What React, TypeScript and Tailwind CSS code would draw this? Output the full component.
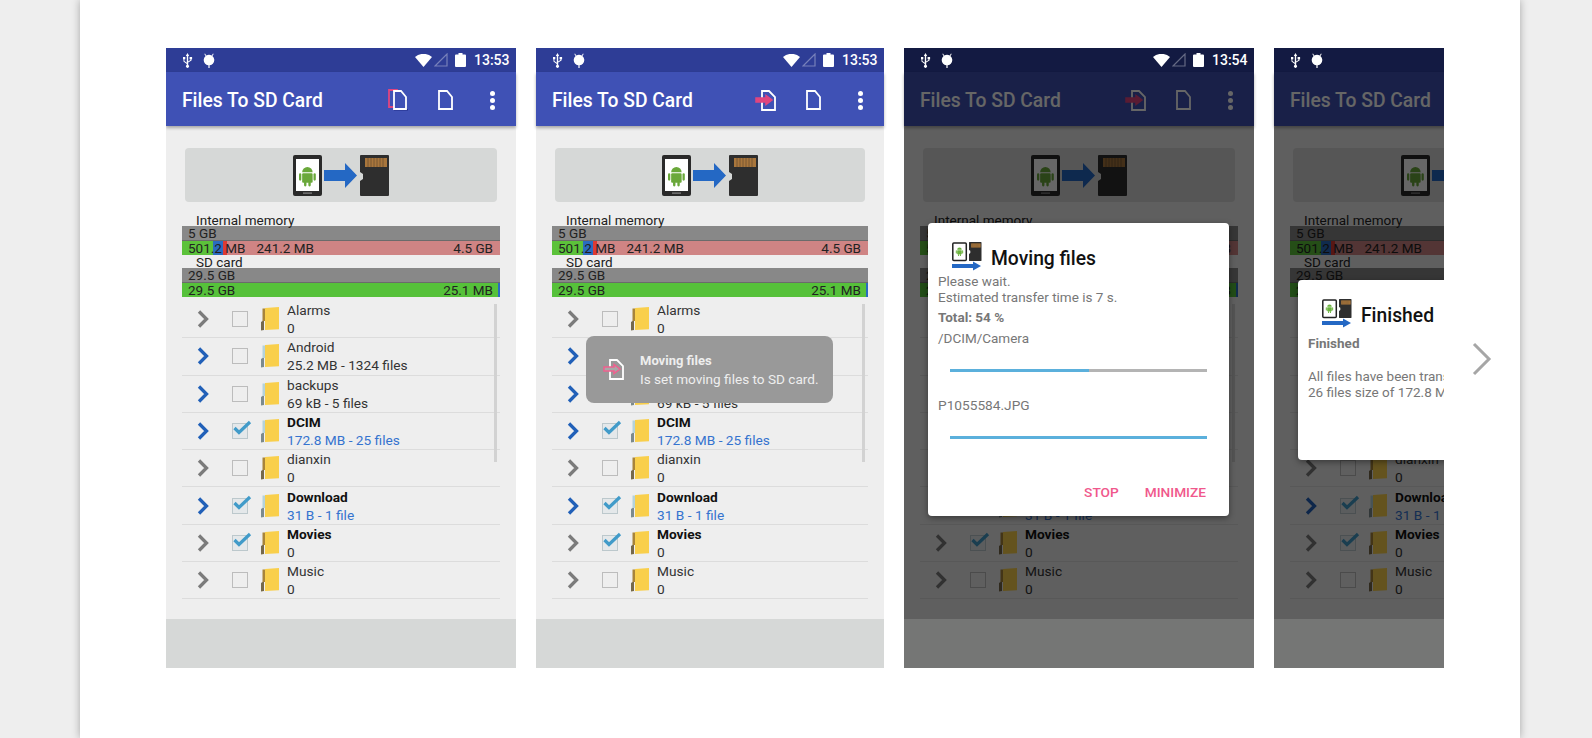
import React from "react";

const rows = [
  { name: "Alarms", sub: "0" },
  { name: "Android", sub: "25.2 MB - 1324 files", full: true },
  { name: "backups", sub: "69 kB - 5 files", full: true },
  { name: "DCIM", sub: "172.8 MB - 25 files", full: true, checked: true },
  { name: "dianxin", sub: "0" },
  { name: "Download", sub: "31 B - 1 file", full: true, checked: true },
  { name: "Movies", sub: "0", checked: true },
  { name: "Music", sub: "0" },
];

const AndroidGlyph = ({ x, y, s, color = "#6aa83a" }: { x: number; y: number; s: number; color?: string }) => (
  <g transform={`translate(${x} ${y}) scale(${s})`} fill={color}>
    <path d="M3 6a5 5 0 0 1 10 0z" />
    <rect x="3" y="7" width="10" height="9" rx="1" />
    <rect x="0" y="7" width="2.2" height="7" rx="1.1" />
    <rect x="13.8" y="7" width="2.2" height="7" rx="1.1" />
    <rect x="4.8" y="15" width="2.3" height="4.5" rx="1.1" />
    <rect x="8.9" y="15" width="2.3" height="4.5" rx="1.1" />
  </g>
);

const SdCard = ({ x, y, w, h }: { x: number; y: number; w: number; h: number }) => (
  <g transform={`translate(${x} ${y}) scale(${w / 29} ${h / 41})`}>
    <path d="M1 0h27a1 1 0 0 1 1 1v39a1 1 0 0 1-1 1H1a1 1 0 0 1-1-1V26l3-2v-5l-3-2V1a1 1 0 0 1 1-1z" fill="#2e2e2e" />
    <rect x="5" y="3" width="22" height="9" fill="#a9763c" />
    <path d="M8 3v9M11 3v9M14 3v9M17 3v9M20 3v9M23 3v9" stroke="#6d5230" strokeWidth="0.8" />
  </g>
);

const Banner = () => (
  <svg width="96" height="41" viewBox="0 0 96 41" className="block">
    <rect x="0" y="0" width="29" height="41" rx="2" fill="#2a2a2a" />
    <rect x="3" y="4" width="23" height="32" fill="#ffffff" />
    <rect x="10" y="37.5" width="9" height="1.2" fill="#888888" />
    <AndroidGlyph x={6} y={11} s={1.05} />
    <path d="M31 15h21V8l12 12.500L52 33v-7H31z" fill="#2468c4" />
    <SdCard x={67} y={0} w={29} h={41} />
  </svg>
);

const DialogIcon = () => (
  <svg width="30" height="29" viewBox="0 0 30 29" className="block shrink-0">
    <rect x="0.800" y="1" width="13.500" height="17.500" rx="1" fill="#ffffff" stroke="#222222" strokeWidth="1.500" />
    <AndroidGlyph x={3.800} y={5} s={0.46} color="#6cb33f" />
    <SdCard x={17} y={0} w={12.500} h={19} />
    <path d="M0 22h21v-2.500l8 4.500-8 4.500V26H0z" fill="#2468c4" />
  </svg>
);

const CopyIcon = () => (
  <svg width="20" height="22" viewBox="0 0 20 22" className="block">
    <path d="M1 1h8v17H1z" fill="none" stroke="#e0457f" strokeWidth="1.800" />
    <path d="M6 20.800h14" stroke="#1a237e" strokeWidth="1.200" />
    <path d="M6 2h7l5 6v12H6z" fill="#3f51b5" stroke="#ffffff" strokeWidth="1.800" />
  </svg>
);

const MoveIcon = ({ outline }: { outline?: boolean }) => (
  <svg width="21" height="21" viewBox="0 0 21 21" className="block">
    <path d="M7 1h7l6 6v13H7z" fill="none" stroke="#ffffff" strokeWidth="1.800" />
    <path d="M1 8h10V5.500l6 4.500-6 4.500V12H1z" fill={outline ? "#a8a8a8" : "#e0457f"} stroke={outline ? "#f0608f" : "#e0457f"} strokeWidth="1.500" />
  </svg>
);

const DocIcon = () => (
  <svg width="15" height="20" viewBox="0 0 15 20" className="block">
    <path d="M1 1h8l5 6v12H1z" fill="none" stroke="#ffffff" strokeWidth="1.800" />
  </svg>
);

const Chevron = ({ color }: { color: string }) => (
  <svg width="12" height="18" viewBox="0 0 12 18" className="block shrink-0">
    <path d="M2 1.500 9.500 9 2 16.500" fill="none" stroke={color} strokeWidth="3.300" />
  </svg>
);

const Folder = ({ full }: { full?: boolean }) => (
  <svg width="18" height="24" viewBox="0 0 18 24" className="block shrink-0">
    <path d="M0 15l3-2v10l-3 .5z" fill={full ? "#7c8a8c" : "#75684a"} />
    <path d="M1.500 1.500h3V14h-3z" fill={full ? "#b4d2da" : "#a8843a"} />
    <path d="M4 1.100 18 0v22.300L4 23z" fill="#f9cf4b" />
  </svg>
);

const Checkbox = ({ checked }: { checked?: boolean }) => (
  <div className={`relative w-4 h-4 shrink-0 border-[1.5px] ${checked ? "border-[#bcc8cc] bg-[#e4e8ea]" : "border-[#bcbcbc]"}`}>
    {checked && (
      <svg width="20" height="16" viewBox="0 0 20 16" className="absolute -top-[4px] left-0">
        <path d="M1.500 8l4.500 4.500L17 2" fill="none" stroke="#419bc9" strokeWidth="3.200" />
      </svg>
    )}
  </div>
);

const StatusBar = ({ time, dim }: { time: string; dim?: boolean }) => (
  <div className={`h-6 shrink-0 flex items-center pl-[16px] pr-2 ${dim ? "bg-[#131a42]" : "bg-[#2e3d96]"}`}>
    <svg width="11" height="15" viewBox="0 0 11 15" className="block">
      <path d="M5.500 0 3.800 3h1v6.800L2.400 8V6.300h.9V4H1v2.300h.5v2.100l3.300 2.600v1a1.500 1.500 0 1 0 1.400 0V9.400l3.300-2V6.300h.6V4H7.600v2.300h.8v.7L6.200 8.400V3h1z" fill="#ffffff" />
    </svg>
    <svg width="12" height="15" viewBox="0 0 12 15" className="block ml-[10px]">
      <path d="M2 .5 3.300 2.500a5 5 0 0 1 5.400 0L10 .5l.7.400-1.300 2.100A5.300 5.300 0 1 1 2.600 3L1.300 .9z" fill="#ffffff" />
      <rect x="5.400" y="10" width="1.200" height="5" fill="#ffffff" />
    </svg>
    <div className="flex-1" />
    <svg width="17" height="13" viewBox="0 0 17 13" className="block">
      <path d="M0 3a13 13 0 0 1 17 0L8.500 13z" fill="#ffffff" />
    </svg>
    <svg width="14" height="14" viewBox="0 0 14 14" className="block ml-[2px]">
      <path d="M1 13 13 1v12z" fill="none" stroke="#ffffff" strokeOpacity="0.35" strokeWidth="1.200" />
    </svg>
    <svg width="11" height="14" viewBox="0 0 11 14" className="block ml-[7px]">
      <path d="M3.500 0h4v1.500H10a1 1 0 0 1 1 1V13a1 1 0 0 1-1 1H1a1 1 0 0 1-1-1V2.500a1 1 0 0 1 1-1h2.500z" fill="#ffffff" />
    </svg>
    <span className="ml-2 w-[34px] text-[14px] font-medium leading-none text-white">{time}</span>
  </div>
);

const Toolbar = ({ icon }: { icon: "copy" | "move" }) => (
  <div className="relative h-[54px] shrink-0 flex items-center pl-4 pr-[21px] bg-[#3f51b5] shadow-[0_2px_3px_rgba(0,0,0,0.3)]">
    <span className="flex-1 pt-1 text-[19.300px] font-medium text-white">Files To SD Card</span>
    <div className="pt-[2px]">{icon === "copy" ? <CopyIcon /> : <MoveIcon />}</div>
    <div className="ml-[30px] pt-[2px]">
      <DocIcon />
    </div>
    <div className="ml-[37px] pt-[2px] flex flex-col gap-[2px]">
      <span className="block w-[5px] h-[5px] rounded-full bg-white" />
      <span className="block w-[5px] h-[5px] rounded-full bg-white" />
      <span className="block w-[5px] h-[5px] rounded-full bg-white" />
    </div>
  </div>
);

const GreyBar = ({ text }: { text: string }) => (
  <div className="h-[14px] mb-px bg-[#888888] pl-[6px] text-[13.500px] leading-[14px] text-[#222222] shadow-[0_1px_0_#6b6b6b]">{text}</div>
);

const Memory = () => (
  <div className="mx-4 mt-[11px] text-[#222222]">
    <div className="h-[13px] pl-[14px] text-[13.500px] leading-[14px]">Internal memory</div>
    <GreyBar text="5 GB" />
    <div className="relative h-[14px] text-[13.500px] leading-[14px]">
      <div className="absolute inset-0 flex">
        <div className="w-[31px] bg-[#5cc23a]" />
        <div className="w-[10px] bg-[#2a6cc0]" />
        <div className="w-[4px] bg-[#dd3a33]" />
        <div className="flex-1 bg-[#cf8484]" />
      </div>
      <div className="relative flex pl-[6px] pr-[7px]">
        <span>501.2 MB</span>
        <span className="ml-[11px] flex-1">241.2 MB</span>
        <span>4.5 GB</span>
      </div>
    </div>
    <div className="h-[13px] pl-[14px] text-[13.500px] leading-[14px]">SD card</div>
    <GreyBar text="29.5 GB" />
    <div className="relative h-[14px] text-[13.500px] leading-[14px]">
      <div className="absolute inset-0 flex">
        <div className="flex-1 bg-[#56c13a]" />
        <div className="w-[2px] bg-[#2a6cc0]" />
      </div>
      <div className="relative flex justify-between pl-[6px] pr-[7px]">
        <span>29.5 GB</span>
        <span>25.1 MB</span>
      </div>
    </div>
  </div>
);

const FileList = () => (
  <div className="relative mx-4 mt-1">
    <div className="absolute right-[3px] top-[3px] w-[3px] h-[158px] bg-[#d2d2d2]" />
    {rows.map((r) => (
      <div key={r.name} className="h-[37.300px] flex items-center pl-[15px] border-b border-[#dcdcdc]">
        <Chevron color={r.full ? "#2160b8" : "#7b7b7b"} />
        <div className="ml-[23px]">
          <Checkbox checked={r.checked} />
        </div>
        <div className="ml-[13px]">
          <Folder full={r.full} />
        </div>
        <div className="ml-2 text-[13.700px] leading-[18px]">
          <div className={r.checked ? "font-bold text-[#111111]" : "text-[#333333]"}>{r.name}</div>
          <div className={r.full && r.checked ? "text-[#3573cf]" : "text-[#333333]"}>{r.sub}</div>
        </div>
      </div>
    ))}
  </div>
);

const Phone = ({ time, icon, width, children, dim }: { time: string; icon: "copy" | "move"; width: string; children?: React.ReactNode; dim?: boolean }) => (
  <div className={`relative shrink-0 h-[620px] flex flex-col bg-[#eeeeee] ${width}`}>
    <StatusBar time={time} dim={dim} />
    <Toolbar icon={icon} />
    <div className="flex-1">
      <div className="mx-[19px] mt-[22px] h-[54px] rounded-sm bg-[#d6d8d7] flex items-center justify-center">
        <Banner />
      </div>
      <Memory />
      <FileList />
    </div>
    <div className={`relative z-10 h-[49px] shrink-0 ${dim ? "bg-[#757675]" : "bg-[#d6d8d7]"}`} />
    {children}
  </div>
);

const Bar = ({ pct }: { pct: string }) => (
  <div className="mx-3 h-[3px] bg-[#b4b4b4]">
    <div className={`h-full bg-[#5bb0dc] ${pct}`} />
  </div>
);

export default function App() {
  return (
    <div className="h-[738px] overflow-hidden bg-[#eeeeee] font-['Roboto',sans-serif]">
      <div className="relative ml-20 w-[1440px] h-[738px] bg-white pt-12 shadow-[0_0_8px_rgba(0,0,0,0.3)]">
        <div className="ml-[86px] w-[1278px] overflow-hidden flex gap-5">
          <Phone time="13:53" icon="copy" width="w-[350px]" />
          <Phone time="13:53" icon="move" width="w-[348px]">
            <div className="absolute left-[50px] top-[288px] w-[247px] h-[67px] rounded-lg bg-[#999999] flex items-center pl-[17px]">
              <MoveIcon outline />
              <div className="ml-[16px] text-[13.600px] leading-[18px] whitespace-nowrap text-[#eeeeee]">
                <div className="text-[13px] font-bold">Moving files</div>
                <div>Is set moving files to SD card.</div>
              </div>
            </div>
          </Phone>
          <Phone time="13:54" icon="move" width="w-[350px]" dim>
            <div className="absolute inset-x-0 top-6 bottom-0 bg-black/60" />
            <div className="absolute left-6 top-[175px] w-[301px] h-[293px] rounded-sm bg-white shadow-[0_2px_6px_rgba(0,0,0,0.4)] px-[10px] text-[13.500px] text-[#777777] z-20">
              <div className="flex items-center pl-[14px] pt-[19px]">
                <DialogIcon />
                <span className="ml-[9px] pt-1 text-[19.300px] font-medium leading-[25px] text-[#111111]">Moving files</span>
              </div>
              <div className="leading-4 mt-[2px]">Please wait.</div>
              <div className="leading-4">Estimated transfer time is 7 s.</div>
              <div className="leading-4 mt-1 font-bold">Total: 54 %</div>
              <div className="leading-4 mt-[5px]">/DCIM/Camera</div>
              <div className="mt-[23px]">
                <Bar pct="w-[54%]" />
              </div>
              <div className="leading-4 mt-[25px] text-[13.700px]">P1055584.JPG</div>
              <div className="mt-[23px]">
                <Bar pct="w-full" />
              </div>
              <div className="mt-[45px] flex justify-end gap-[26px] pr-[13px] text-[13.700px] font-medium leading-4 text-[#f0588c]">
                <span>STOP</span>
                <span>MINIMIZE</span>
              </div>
            </div>
          </Phone>
          <Phone time="13:54" icon="move" width="w-[350px]" dim>
            <div className="absolute inset-x-0 top-6 bottom-0 bg-black/60" />
            <div className="absolute left-6 top-[232px] w-[301px] h-[180px] rounded-sm bg-white shadow-[0_2px_6px_rgba(0,0,0,0.4)] px-[10px] text-[13.500px] text-[#777777] z-20">
              <div className="flex items-center pl-[14px] pt-[19px]">
                <DialogIcon />
                <span className="ml-[9px] pt-1 text-[19.300px] font-medium leading-[25px] text-[#111111]">Finished</span>
              </div>
              <div className="leading-4 mt-[7px] font-bold">Finished</div>
              <div className="leading-4 mt-[17px]">All files have been transferred.</div>
              <div className="leading-4">26 files size of 172.8 MB.</div>
            </div>
          </Phone>
        </div>
        <svg width="20" height="34" viewBox="0 0 20 34" className="absolute left-[1392px] top-[342px]">
          <path d="M2 2 17 17 2 32" fill="none" stroke="#a6a6a6" strokeWidth="3" />
        </svg>
      </div>
    </div>
  );
}
